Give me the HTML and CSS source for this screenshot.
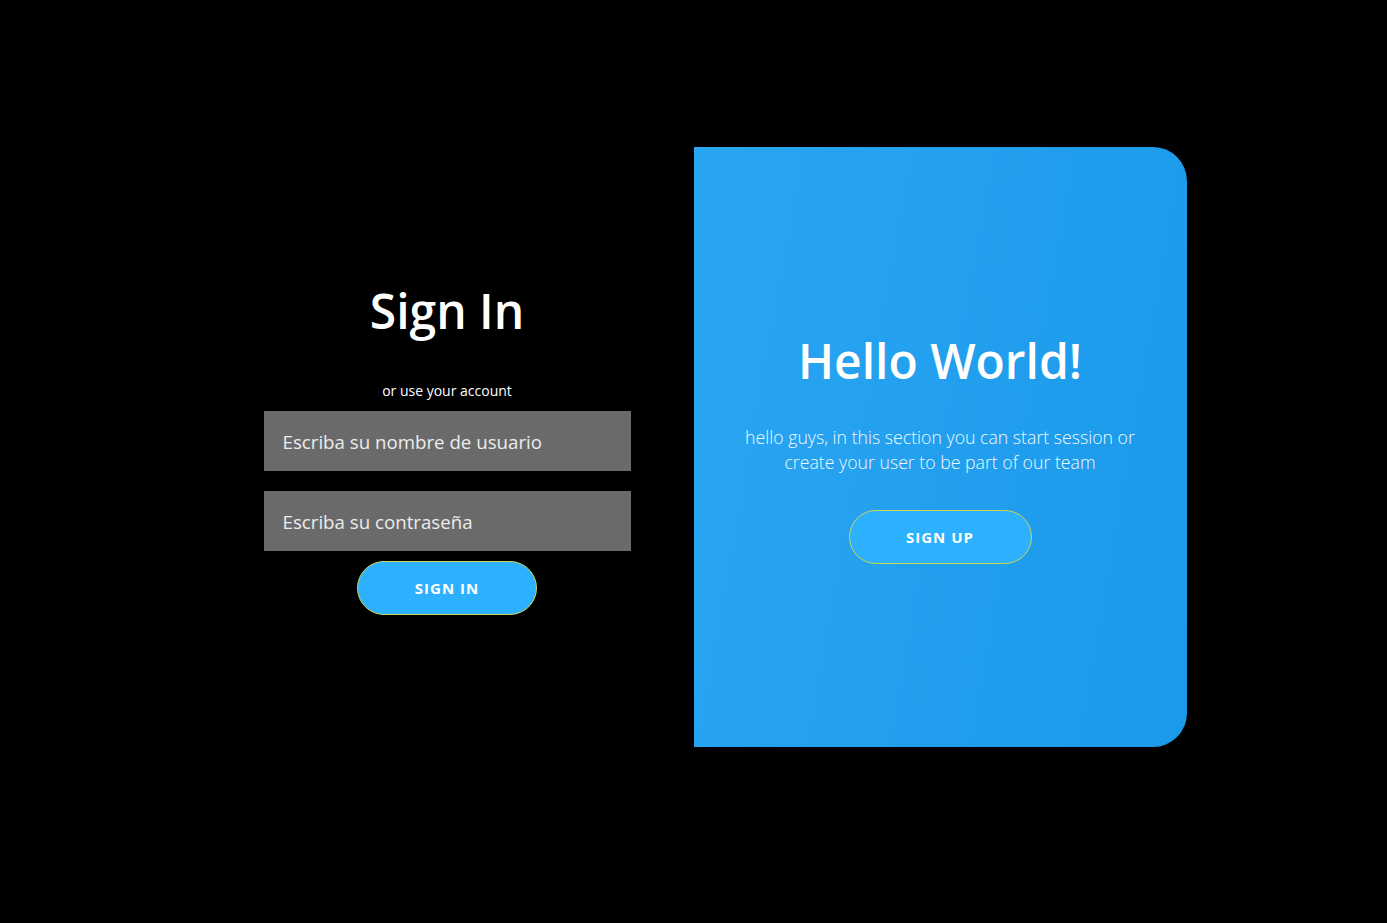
FILE: index.html
```html
<!DOCTYPE html>
<html lang="en">
<head>
<meta charset="utf-8">
<title>Sign In</title>
<link rel="stylesheet" href="styles.css">
</head>
<body>
<main class="page">
  <div class="container">
    <section class="panel signin">
      <h1 class="title">Sign In</h1>
      <p class="hint">or use your account</p>
      <form class="form">
        <input class="field" type="text" placeholder="Escriba su nombre de usuario">
        <input class="field" type="password" placeholder="Escriba su contraseña">
        <button class="btn" type="button">SIGN IN</button>
      </form>
    </section>
    <section class="panel overlay">
      <h2 class="hello">Hello World!</h2>
      <p class="text">hello guys, in this section you can start session or create your user to be part of our team</p>
      <button class="btn" type="button">SIGN UP</button>
    </section>
  </div>
</main>
</body>
</html>
```

FILE: styles.css
```css
* { box-sizing: border-box; }
html, body { margin: 0; padding: 0; background: #000; }
body {
  font-family: "Open Sans", "Noto Sans", sans-serif;
  color: #fff;
  width: 1387px;
  height: 923px;
}
.page {
  display: flex;
  justify-content: center;
  padding-top: 147px;
}
.container {
  display: flex;
  width: 986px;
  height: 600px;
}
.panel {
  width: 493px;
  display: flex;
  flex-direction: column;
  align-items: center;
  justify-content: center;
}
.signin { padding-top: 2px; }
.title {
  margin: 0;
  font-size: 48px;
  font-weight: 600;
  line-height: 60px;
}
.hint {
  margin: 40px 0 10px;
  font-size: 14px;
  line-height: 20px;
}
.form {
  display: flex;
  flex-direction: column;
  align-items: center;
}
.field {
  width: 367px;
  height: 60px;
  border: 0;
  outline: 0;
  background: #6a6a6a;
  color: #eee;
  font-family: inherit;
  font-size: 18.7px;
  padding: 0 19px;
  margin-bottom: 20px;
}
.field:last-of-type { margin-bottom: 10px; }
.field::placeholder { color: #ececec; opacity: 1; }
.btn {
  width: 180px;
  height: 54px;
  border-radius: 27px;
  border: 1px solid #c9d655;
  background: #2db1ff;
  color: #fff;
  font-family: inherit;
  font-size: 15px;
  font-weight: 700;
  letter-spacing: 1px;
}
.overlay {
  background: linear-gradient(100deg, #2aa5f2 0%, #1a9aea 100%);
  border-radius: 0 34px 34px 0;
}
.hello {
  margin: 0;
  font-size: 48px;
  font-weight: 600;
  line-height: 60px;
}
.text {
  margin: 34px 0 35px;
  width: 410px;
  text-align: center;
  font-size: 17.7px;
  font-weight: 300;
  line-height: 25px;
  color: #eef8ff;
}
.overlay .btn { width: 183px; }
```
